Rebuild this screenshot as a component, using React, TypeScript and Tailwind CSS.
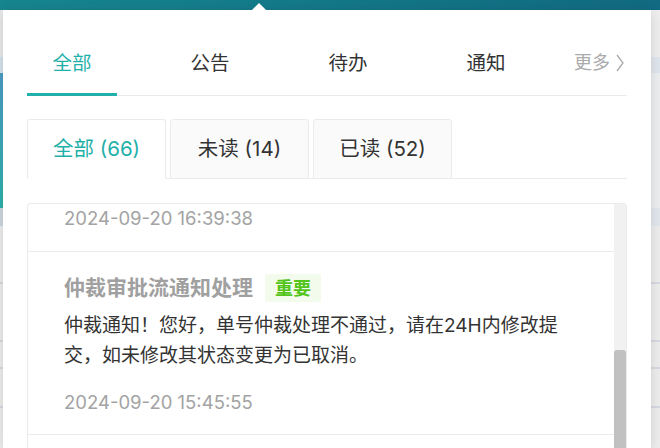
import React from 'react';

const FONT = 'Inter, "Noto Sans CJK SC", sans-serif';

const topTabs = ['全部', '公告', '待办', '通知'];
const subTabs = ['全部 (66)', '未读 (14)', '已读 (52)'];

// strips of the page that sit behind the popup
const SideStrip: React.FC<{ side: 'left' | 'right' }> = ({ side }) => {
  const left = side === 'left';
  return (
    <div className="flex flex-col h-full">
      <div className={`h-[47px] ${left ? 'bg-[#e8e9eb]' : 'bg-[#efeff0]'}`}></div>
      <div className={`h-[16px] ${left ? 'bg-[#d6e3ec]' : 'bg-[#e1e7ee]'}`}></div>
      <div
        className={`h-[135px] ${
          left ? 'bg-gradient-to-b from-[#4b9dc6] to-[#2bb3ad]' : 'bg-[#eeeff0]'
        }`}
      ></div>
      <div className={`h-[18px] ${left ? 'bg-[#cfd8df]' : 'bg-[#e3e8ee]'}`}></div>
      <div className="flex-1 bg-[#eeeeef] flex flex-col">
        <div className="h-[58px] border-b-2 border-[#d8dae3]"></div>
        <div className="h-[58px] border-b-2 border-[#d8dae3]"></div>
        <div className="h-[27px] border-b-2 border-[#d8dae3]"></div>
        <div className="h-[39px] border-b-2 border-[#d8dae3]"></div>
      </div>
    </div>
  );
};

const App: React.FC = () => {
  return (
    <div
      className="w-[660px] h-[448px] overflow-hidden flex flex-col bg-[#eeeeef]"
      style={{ fontFamily: FONT }}
    >
      <div className="h-[10px] flex-none bg-gradient-to-r from-[#17868f] to-[#116a82]"></div>

      <div className="flex flex-1 min-h-0">
        <div className="w-[3px] flex-none">
          <SideStrip side="left" />
        </div>

        <div className="w-[648px] flex-none relative bg-white px-[24px] shadow-[0_2px_12px_rgba(0,0,0,0.14)]">
          {/* caret */}
          <div className="absolute -top-[5px] left-[251px] w-[10px] h-[10px] rotate-45 bg-white"></div>

          {/* category tabs */}
          <div className="relative flex items-end pt-[40px] border-b border-[#ebebeb]">
            {topTabs.map((t, i) => (
              <div
                key={t}
                className={`relative w-[90px] h-[45px] text-center text-[19.5px] leading-[26px] ${
                  i === 0 ? 'text-[#1fb0aa]' : 'text-[#333]'
                } ${i > 0 ? 'ml-[48px]' : ''}`}
              >
                {t}
                {i === 0 && (
                  <div className="absolute left-0 right-0 -bottom-[1px] h-[3px] bg-[#22b0ab]"></div>
                )}
              </div>
            ))}
            <div className="ml-auto h-[45px] flex items-start text-[18px] leading-[26px] text-[#aaa] pr-[2px]">
              更多
              <svg className="w-[10px] h-[26px] ml-[5px]" viewBox="0 0 10 26" fill="none">
                <path d="M2 5l6 8-6 8" stroke="#aaa" strokeWidth={1.3} />
              </svg>
            </div>
          </div>

          {/* read-state tabs */}
          <div className="mt-[23px] flex gap-[4px] border-b border-[#ebebeb]">
            {subTabs.map((t, i) => (
              <div
                key={t}
                className={`w-[139px] h-[60px] -mb-[1px] flex items-center justify-center rounded-t-[3px] border border-[#ebebeb] text-[20.5px] ${
                  i === 0 ? 'bg-white border-b-white text-[#1fb0aa]' : 'bg-[#fafafa] text-[#333]'
                }`}
              >
                {t}
              </div>
            ))}
          </div>

          {/* message list */}
          <div className="mt-[24px] h-[246px] flex border border-b-0 border-[#ebebeb] rounded-t-[4px] overflow-hidden">
            <div className="flex-1 min-w-0">
              <div className="px-[36px] pt-[1px] pb-[20px] border-b border-[#ebebeb]">
                <div className="text-[18.5px] leading-[26px] text-[#a3a3a3]">2024-09-20 16:39:38</div>
              </div>

              <div className="px-[36px] pt-[22px] pb-[19px] border-b border-[#ebebeb]">
                <div className="flex items-center h-[28px]">
                  <span className="text-[21px] font-bold text-[#a0a0a0]">仲裁审批流通知处理</span>
                  <span className="ml-[12px] h-[28px] px-[10px] flex items-center bg-[#f3fcec] text-[#52c41a] text-[18px] font-bold rounded-[2px]">
                    重要
                  </span>
                </div>
                <p className="mt-[9px] text-[19px] leading-[30px] text-[#333]">
                  仲裁通知！您好，单号仲裁处理不通过，请在24H内修改提交，如未修改其状态变更为已取消。
                </p>
                <div className="mt-[18px] text-[18.5px] leading-[26px] text-[#a3a3a3]">2024-09-20 15:45:55</div>
              </div>
            </div>

            {/* scrollbar */}
            <div className="w-[12px] flex-none bg-[#f1f1f1] flex flex-col">
              <div className="h-[146px]"></div>
              <div className="flex-1 bg-[#c1c1c1] rounded-t-[3px]"></div>
            </div>
          </div>
        </div>

        <div className="flex-1">
          <SideStrip side="right" />
        </div>
      </div>
    </div>
  );
};

export default App;
